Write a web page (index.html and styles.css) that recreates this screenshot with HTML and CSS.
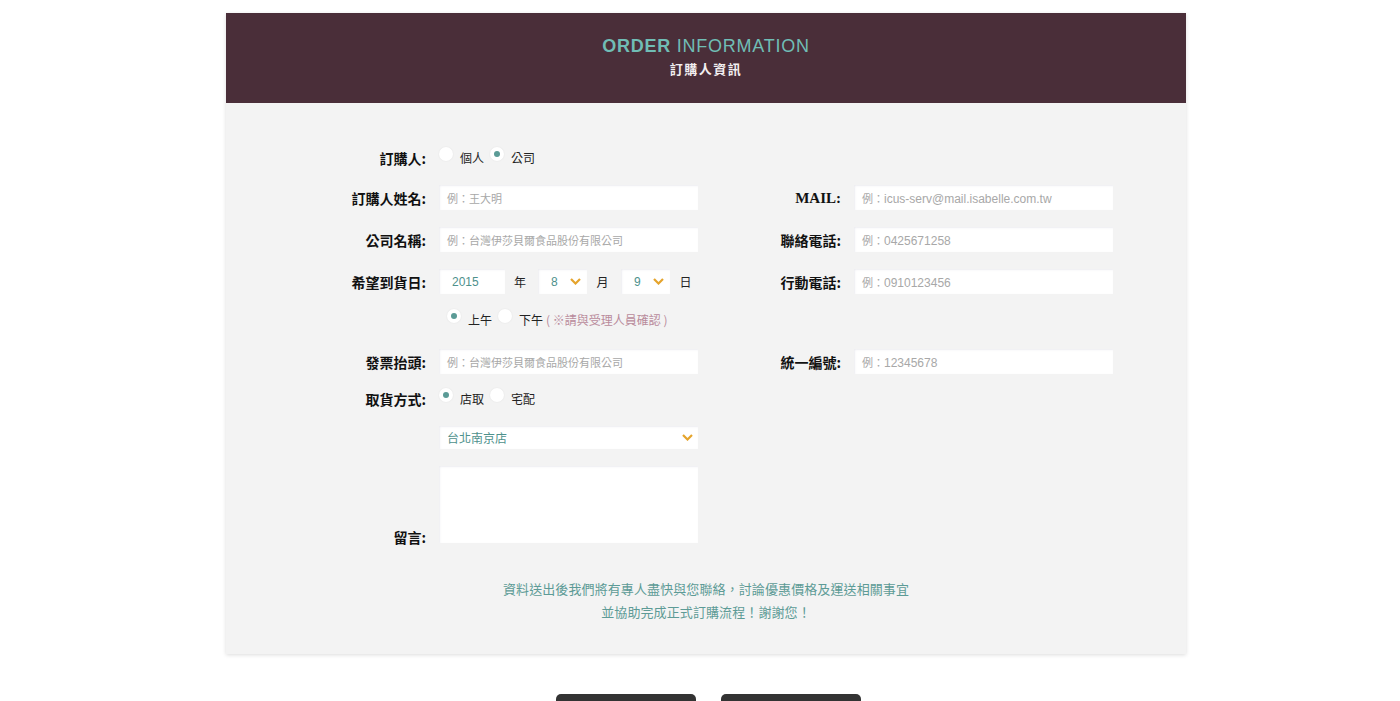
FILE: index.html
```html
<!DOCTYPE html>
<html lang="zh-Hant">
<head>
<meta charset="utf-8">
<title>訂購人資訊</title>
<link rel="stylesheet" href="styles.css">
</head>
<body>
<div class="wrap">
  <div class="card">
    <header class="card-head">
      <h1 class="title"><b>ORDER</b> INFORMATION</h1>
      <div class="subtitle">訂購人資訊</div>
    </header>
    <form class="form">
      <div class="row row-1">
        <label class="lbl">訂購人:</label>
        <div class="radios">
          <span class="radio"></span><span class="opt">個人</span>
          <span class="radio on"></span><span class="opt">公司</span>
        </div>
      </div>
      <div class="row row-2">
        <label class="lbl">訂購人姓名:</label>
        <div class="input"><span class="ph">例：王大明</span></div>
        <label class="lbl lbl-serif">MAIL:</label>
        <div class="input"><span class="ph">例：<span class="lat">icus-serv@mail.isabelle.com.tw</span></span></div>
      </div>
      <div class="row row-3">
        <label class="lbl">公司名稱:</label>
        <div class="input"><span class="ph">例：台灣伊莎貝爾食品股份有限公司</span></div>
        <label class="lbl">聯絡電話:</label>
        <div class="input"><span class="ph">例：<span class="lat">0425671258</span></span></div>
      </div>
      <div class="row row-3">
        <label class="lbl">希望到貨日:</label>
        <div class="date">
          <div class="input year"><span class="val">2015</span></div>
          <span class="unit">年</span>
          <div class="input sel small"><span class="val">8</span>
            <svg class="chev" width="11" height="7" viewBox="0 0 11 7"><polyline points="1,1 5.5,5.5 10,1" fill="none" stroke="#e5a42c" stroke-width="2.2"/></svg></div>
          <span class="unit">月</span>
          <div class="input sel small"><span class="val">9</span>
            <svg class="chev" width="11" height="7" viewBox="0 0 11 7"><polyline points="1,1 5.5,5.5 10,1" fill="none" stroke="#e5a42c" stroke-width="2.2"/></svg></div>
          <span class="unit">日</span>
        </div>
        <label class="lbl">行動電話:</label>
        <div class="input"><span class="ph">例：<span class="lat">0910123456</span></span></div>
      </div>
      <div class="row row-5">
        <span></span>
        <div class="radios indent">
          <span class="radio on"></span><span class="opt">上午</span>
          <span class="radio"></span><span class="opt">下午</span>
          <span class="note">( ※請與受理人員確認 )</span>
        </div>
      </div>
      <div class="row row-6">
        <label class="lbl">發票抬頭:</label>
        <div class="input"><span class="ph">例：台灣伊莎貝爾食品股份有限公司</span></div>
        <label class="lbl">統一編號:</label>
        <div class="input"><span class="ph">例：<span class="lat">12345678</span></span></div>
      </div>
      <div class="row row-7">
        <label class="lbl">取貨方式:</label>
        <div class="radios">
          <span class="radio on"></span><span class="opt">店取</span>
          <span class="radio"></span><span class="opt">宅配</span>
        </div>
      </div>
      <div class="row row-8">
        <span></span>
        <div class="input sel store"><span class="val">台北南京店</span>
          <svg class="chev" width="11" height="7" viewBox="0 0 11 7"><polyline points="1,1 5.5,5.5 10,1" fill="none" stroke="#e5a42c" stroke-width="2.2"/></svg></div>
      </div>
      <div class="row row-9">
        <label class="lbl lbl-bottom">留言:</label>
        <div class="input textarea"></div>
      </div>
      <p class="notice">資料送出後我們將有專人盡快與您聯絡，討論優惠價格及運送相關事宜<br>並協助完成正式訂購流程！謝謝您！</p>
    </form>
  </div>
  <div class="buttons">
    <button class="btn" type="button"></button>
    <button class="btn" type="button"></button>
  </div>
</div>
</body>
</html>
```

FILE: styles.css
```css
* { box-sizing: border-box; }
html, body { margin: 0; padding: 0; background: #fff; }
body {
  font-family: "Liberation Sans", "Noto Sans CJK TC", sans-serif;
  color: #222;
}
.wrap {
  width: 960px;
  margin: 13px 0 0 226px;
}
.card {
  background: #f3f3f3;
  box-shadow: 0 1px 4px rgba(0,0,0,0.14);
}
.card-head {
  height: 90px;
  background: #4a2e39;
  text-align: center;
  padding-top: 23px;
}
.title {
  margin: 0;
  font-family: "Liberation Sans", sans-serif;
  font-size: 18px;
  font-weight: normal;
  letter-spacing: 0.75px;
  color: #70bdb5;
  line-height: 20px;
}
.title b { font-weight: bold; }
.subtitle {
  margin-top: 4px;
  font-family: "Noto Sans CJK TC", sans-serif;
  font-size: 13px;
  font-weight: bold;
  letter-spacing: 1.5px;
  color: #f2eef0;
  line-height: 18px;
}
.form {
  margin: 0;
  padding: 42px 0 31px;
}
.row {
  display: grid;
  grid-template-columns: 213px 259px 156px 259px;
  align-items: center;
  height: 25px;
}
.row-2 { margin-top: 15px; }
.row-3 { margin-top: 17px; }
.row-5 { margin-top: 13px; }
.row-6 { margin-top: 17px; }
.row-7 { margin-top: 12px; }
.row-8 { margin-top: 15px; height: 23px; }
.row-9 { margin-top: 17px; height: 77px; }
.lbl {
  text-align: right;
  padding-right: 13px;
  font-family: "Noto Sans CJK TC", serif;
  font-size: 14px;
  font-weight: bold;
  color: #111;
  line-height: 20px;
}
.lbl-serif {
  font-family: "Liberation Serif", "Noto Sans CJK TC", serif;
  font-size: 15px;
}
.lbl-bottom { align-self: end; margin-bottom: -4px; }
.input {
  height: 25px;
  background: #fff;
  box-shadow: inset 1px 1px 2px rgba(80,80,120,0.10);
  display: flex;
  align-items: center;
  padding-left: 8px;
  position: relative;
}
.ph {
  font-family: "Liberation Sans", "Noto Sans CJK TC", sans-serif;
  font-size: 11px;
  color: #a8a8a8;
}
.ph .lat { font-size: 12px; }
.val {
  font-family: "Liberation Sans", "Noto Sans CJK TC", sans-serif;
  font-size: 12px;
  color: #4e918c;
}
.radios {
  display: flex;
  align-items: center;
  grid-column: 2 / span 3;
}
.radios.indent { padding-left: 8px; }
.radio {
  width: 14px;
  height: 14px;
  border-radius: 50%;
  background: #fff;
  box-shadow: 0 0 2px rgba(0,0,0,0.08);
  position: relative;
  margin-top: -8px;
}
.radio.on::after {
  content: "";
  position: absolute;
  left: 4px;
  top: 4px;
  width: 6px;
  height: 6px;
  border-radius: 50%;
  background: #5b9b96;
}
.opt {
  font-family: "Noto Sans CJK TC", serif;
  font-size: 12px;
  color: #222;
  margin: 0 6px 0 7px;
}
.note {
  font-family: "Noto Sans CJK TC", sans-serif;
  font-size: 12px;
  color: #b98b9c;
  margin-left: -3px;
}
.date {
  display: flex;
  align-items: center;
}
.year { width: 66px; padding-left: 13px; flex: none; }
.unit {
  font-family: "Noto Sans CJK TC", serif;
  font-size: 12px;
  color: #222;
  width: 33px;
  flex: none;
  text-align: center;
  padding-right: 3px;
}
.unit + .sel + .unit { width: 34px; }
.sel { justify-content: space-between; padding-right: 6px; }
.small { width: 49px; padding-left: 13px; flex: none; }
.store { padding-left: 8px; padding-right: 5px; height: 23px; }
.chev { display: block; }
.textarea { height: 77px; }
.notice {
  margin: 34px 0 0;
  text-align: center;
  font-family: "Noto Sans CJK TC", sans-serif;
  font-size: 13px;
  line-height: 23px;
  color: #5d9b96;
  letter-spacing: 0.1px;
}
.buttons {
  display: flex;
  justify-content: center;
  gap: 25px;
  margin-top: 40px;
  padding-left: 5px;
}
.btn {
  width: 140px;
  height: 40px;
  border: 0;
  border-radius: 5px;
  background: #333;
}
```
